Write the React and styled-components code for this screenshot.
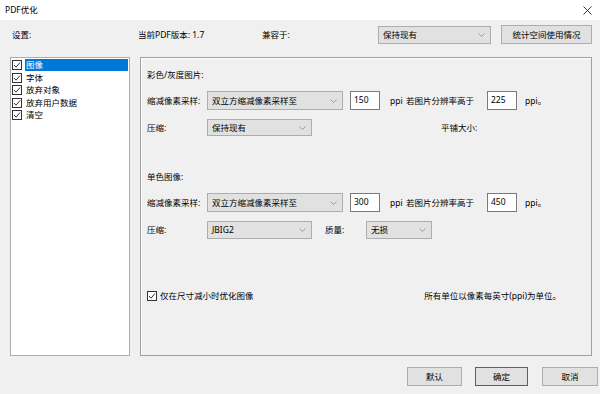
import React from "react";
import styled, { createGlobalStyle } from "styled-components";

const Global = createGlobalStyle`
  html, body { margin: 0; padding: 0; background: #f0f0f0; }
  body {
    font-family: "Noto Sans", "Noto Sans CJK SC", sans-serif;
    font-size: 8.5px;
    color: #000;
  }
  * { box-sizing: border-box; }
`;

const Window = styled.div`
  width: 600px;
  height: 394px;
  display: flex;
  flex-direction: column;
  background: #f0f0f0;
  overflow: hidden;
`;

const TitleBar = styled.div`
  height: 20px;
  flex: none;
  background: #fff;
  display: flex;
  align-items: center;
  justify-content: space-between;
  padding: 0 8px 0 5px;
`;

const TitleText = styled.span`
  font-size: 8.5px;
  line-height: 12px;
`;

const CloseBtn = styled.span`
  width: 10px;
  height: 10px;
  display: flex;
  align-items: center;
  justify-content: center;
`;

const Body = styled.div`
  flex: 1;
  display: flex;
  flex-direction: column;
  padding: 5px 8px 0 10px;
`;

const TopRow = styled.div`
  height: 19px;
  display: flex;
  align-items: center;
`;

const Cell = styled.span`
  flex: none;
  width: ${(p) => (p.$w ? `${p.$w}px` : "auto")};
  margin-left: ${(p) => p.$ml || 0}px;
  white-space: nowrap;
  line-height: 12px;
`;

const Spacer = styled.div`
  flex: 1;
`;

const SelectBox = styled.div`
  flex: none;
  width: ${(p) => p.$w}px;
  height: ${(p) => p.$h || 19}px;
  margin-left: ${(p) => p.$ml || 0}px;
  background: #e1e1e1;
  border: 1px solid #adadad;
  display: flex;
  align-items: center;
  justify-content: space-between;
  padding: 0 5px 0 4px;
  white-space: nowrap;
  line-height: 12px;
`;

const Button = styled.div`
  flex: none;
  width: ${(p) => p.$w}px;
  height: 19px;
  margin-left: ${(p) => p.$ml || 0}px;
  background: #e1e1e1;
  border: 1px solid ${(p) => (p.$primary ? "#0078d7" : "#adadad")};
  display: flex;
  align-items: center;
  justify-content: center;
  white-space: nowrap;
  line-height: 12px;
`;

const Main = styled.div`
  margin-top: 13px;
  height: 299px;
  display: flex;
  gap: 10px;
`;

const List = styled.div`
  width: 120px;
  flex: none;
  background: #fff;
  border: 1px solid #abadb3;
  padding: 1px 1px 0 1px;
  display: flex;
  flex-direction: column;
`;

const Item = styled.div`
  height: 12.5px;
  display: flex;
  align-items: center;
  gap: 3px;
`;

const ItemLabel = styled.span`
  flex: 1;
  height: 12px;
  line-height: 12px;
  padding-left: 1px;
  background: ${(p) => (p.$sel ? "#0078d7" : "transparent")};
  color: ${(p) => (p.$sel ? "#fff" : "#000")};
  white-space: nowrap;
`;

const Panel = styled.div`
  flex: 1;
  border: 1px solid #a0a0a0;
  box-shadow: inset 1px 1px 0 #fff;
  padding: 10px 0 0 6px;
  display: flex;
  flex-direction: column;
`;

const Heading = styled.div`
  height: 14px;
  line-height: 14px;
  margin-top: ${(p) => p.$mt || 0}px;
`;

const Row = styled.div`
  display: flex;
  align-items: center;
  height: ${(p) => p.$h || 19}px;
  margin-top: ${(p) => p.$mt || 0}px;
  padding-right: ${(p) => p.$pr || 0}px;
`;

const Input = styled.div`
  flex: none;
  width: 30px;
  height: 19px;
  margin-left: ${(p) => p.$ml || 0}px;
  background: #fff;
  border: 1px solid #7a7a7a;
  padding: 2px 0 0 3px;
  line-height: 12px;
`;

const CheckLabel = styled.span`
  display: flex;
  align-items: center;
  gap: 3px;
  white-space: nowrap;
  line-height: 12px;
`;

const Footer = styled.div`
  margin-top: 11px;
  margin-right: -6px;
  display: flex;
  justify-content: flex-end;
`;

const Chevron = () => (
  <svg width="7" height="4" viewBox="0 0 7 4">
    <polyline points="0.5,0.5 3.5,3.5 6.5,0.5" fill="none" stroke="#8a8a8a" strokeWidth="0.8" />
  </svg>
);

const Check = () => (
  <svg width="10" height="10" viewBox="0 0 10 10" style={{ flex: "none" }}>
    <rect x="0.5" y="0.5" width="9" height="9" fill="#fff" stroke="#333" strokeWidth="1" />
    <polyline points="2,5 4,7.2 8,2.5" fill="none" stroke="#333" strokeWidth="1" />
  </svg>
);

const Select = ({ w, h, ml, children }) => (
  <SelectBox $w={w} $h={h} $ml={ml}>
    <span>{children}</span>
    <Chevron />
  </SelectBox>
);

const items = ["图像", "字体", "放弃对象", "放弃用户数据", "清空"];

export default function App() {
  return (
    <Window>
      <Global />
      <TitleBar>
        <TitleText>PDF优化</TitleText>
        <CloseBtn>
          <svg width="9" height="9" viewBox="0 0 9 9">
            <path d="M0.5 0.5 L8.5 8.5 M8.5 0.5 L0.5 8.5" stroke="#222" strokeWidth="0.9" />
          </svg>
        </CloseBtn>
      </TitleBar>
      <Body>
        <TopRow>
          <Cell $w={128} $ml={2}>设置:</Cell>
          <Cell $w={124} $ml={-2}>当前PDF版本: 1.7</Cell>
          <Cell>兼容于:</Cell>
          <Spacer />
          <Select w={113} h={18}>保持现有</Select>
          <Button $w={91} $ml={10}>统计空间使用情况</Button>
        </TopRow>
        <Main>
          <List>
            {items.map((t, i) => (
              <Item key={t}>
                <Check />
                <ItemLabel $sel={i === 0}>{t}</ItemLabel>
              </Item>
            ))}
          </List>
          <Panel>
            <Heading>彩色/灰度图片:</Heading>
            <Row $mt={9}>
              <Cell $w={60}>缩减像素采样:</Cell>
              <Select w={136}>双立方缩减像素采样至</Select>
              <Input $ml={7}>150</Input>
              <Cell $w={16} $ml={10}>ppi</Cell>
              <Cell $w={81}>若图片分辨率高于</Cell>
              <Input>225</Input>
              <Cell $ml={8}>ppi。</Cell>
            </Row>
            <Row $mt={9} $h={17}>
              <Cell $w={60}>压缩:</Cell>
              <Select w={105} h={17}>保持现有</Select>
              <Cell $ml={129}>平铺大小:</Cell>
            </Row>
            <Heading $mt={34}>单色图像:</Heading>
            <Row $mt={9}>
              <Cell $w={60}>缩减像素采样:</Cell>
              <Select w={136}>双立方缩减像素采样至</Select>
              <Input $ml={7}>300</Input>
              <Cell $w={16} $ml={10}>ppi</Cell>
              <Cell $w={81}>若图片分辨率高于</Cell>
              <Input>450</Input>
              <Cell $ml={8}>ppi。</Cell>
            </Row>
            <Row $mt={9} $h={18}>
              <Cell $w={60}>压缩:</Cell>
              <Select w={105} h={18}>JBIG2</Select>
              <Cell $w={41} $ml={13}>质量:</Cell>
              <Select w={66} h={18}>无损</Select>
            </Row>
            <Row $mt={50} $h={14} $pr={30}>
              <CheckLabel>
                <Check />
                仅在尺寸减小时优化图像
              </CheckLabel>
              <Spacer />
              <Cell>所有单位以像素每英寸(ppi)为单位。</Cell>
            </Row>
          </Panel>
        </Main>
        <Footer>
          <Button $w={55}>默认</Button>
          <Button $w={53} $ml={13} $primary>确定</Button>
          <Button $w={56} $ml={14}>取消</Button>
        </Footer>
      </Body>
    </Window>
  );
}
